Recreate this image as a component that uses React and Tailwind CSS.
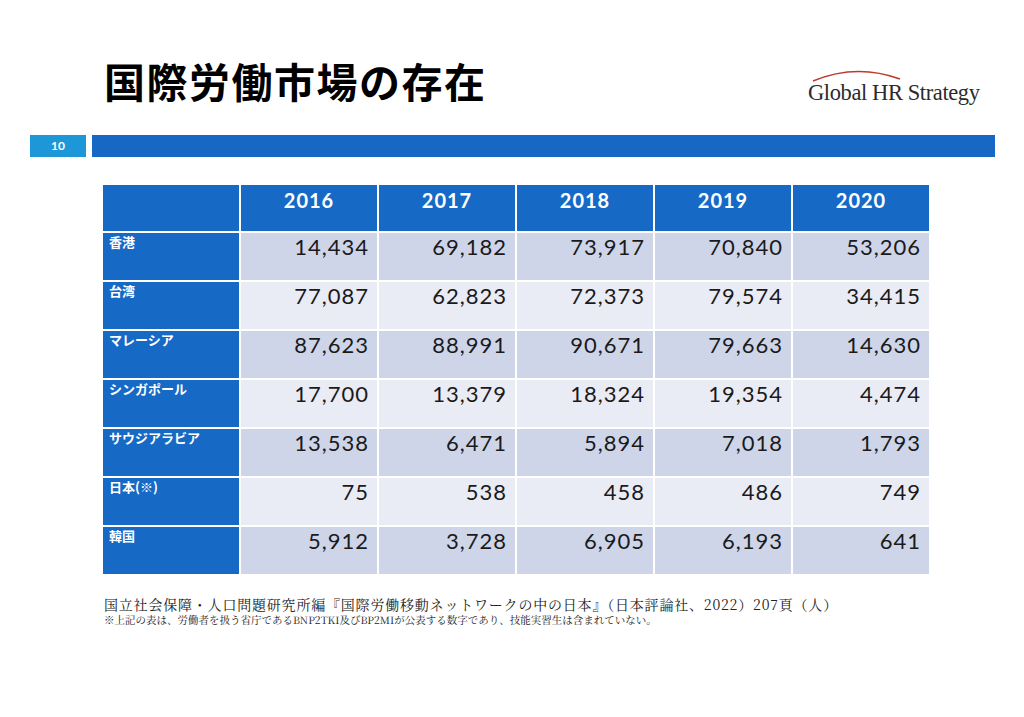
import React from 'react'

const years = ['2016', '2017', '2018', '2019', '2020']

const rows = [
    ['香港', ['14,434', '69,182', '73,917', '70,840', '53,206']],
    ['台湾', ['77,087', '62,823', '72,373', '79,574', '34,415']],
    ['マレーシア', ['87,623', '88,991', '90,671', '79,663', '14,630']],
    ['シンガポール', ['17,700', '13,379', '18,324', '19,354', '4,474']],
    ['サウジアラビア', ['13,538', '6,471', '5,894', '7,018', '1,793']],
    ['日本(※)', ['75', '538', '458', '486', '749']],
    ['韓国', ['5,912', '3,728', '6,905', '6,193', '641']],
]

const jp = { fontFamily: '"Noto Sans CJK JP", sans-serif' }
const num = { fontFamily: 'Lato, "Open Sans", sans-serif' }
const serif = { fontFamily: '"Noto Serif CJK JP", "Liberation Serif", serif' }

const Logo = () => (
    <div className='relative w-[172px] h-[40px]'>
        <svg className='absolute left-0 top-0' width='172' height='20' viewBox='0 0 172 20'>
            <path d='M5 14 Q 48 -4 92 12' stroke='#c0392b' strokeWidth='1.5' fill='none' />
        </svg>
        <div className='absolute left-0 top-[9px] text-[22.5px] tracking-[-0.4px] text-[#2b2b2b] whitespace-nowrap'
            style={{ fontFamily: '"Liberation Serif", serif' }}>
            Global HR Strategy
        </div>
    </div>
)

const App = () => {
    return (
        <div className='w-[1024px] h-[717px] bg-white relative overflow-hidden' style={jp}>

            <div className='flex items-start pt-[52px] pl-[104px] pr-[44px] h-[135px]'>
                <h1 className='text-[41px] font-bold text-black leading-[56px] tracking-[1.5px]'>国際労働市場の存在</h1>
                <div className='ml-auto mt-[15px]'>
                    <Logo />
                </div>
            </div>

            <div className='flex gap-[6px] pl-[30px] h-[22px]'>
                <div className='w-[56px] bg-[#1d97d8] text-white text-[12px] font-bold flex items-center justify-center' style={num}>10</div>
                <div className='w-[903px] bg-[#1768c4]'></div>
            </div>

            <div className='ml-[103px] mt-[28px] w-[826px] grid grid-cols-[136px_repeat(5,136px)] gap-[2px]'>
                <div className='h-[46px] bg-[#1769c6]'></div>
                {years.map((y) => (
                    <div key={y} className='h-[46px] bg-[#1769c6] text-white font-bold text-[20px] tracking-[1px] text-center' style={num}>{y}</div>
                ))}
                {rows.map(([name, vals], i) => (
                    <React.Fragment key={name}>
                        <div className='h-[47px] bg-[#1769c6] text-white font-bold text-[13px] pl-[6px] leading-[18px]'>{name}</div>
                        {vals.map((v, j) => (
                            <div key={j}
                                className={'h-[47px] text-right pr-[8px] leading-[28px] text-[22px] tracking-[1px] text-[#1a1a1a] ' + (i % 2 === 0 ? 'bg-[#cfd5e9]' : 'bg-[#e9ebf5]')}
                                style={num}>{v}</div>
                        ))}
                    </React.Fragment>
                ))}
            </div>

            <div className='ml-[104px] mt-[21px] text-[14px] tracking-[0.8px] leading-[18px] text-[#222] whitespace-nowrap' style={serif}>
                国立社会保障・人口問題研究所編『国際労働移動ネットワークの中の日本』（日本評論社、2022）207頁（人）
            </div>
            <div className='ml-[104px] text-[10.5px] leading-[13px] text-[#222] whitespace-nowrap' style={serif}>
                ※上記の表は、労働者を扱う省庁であるBNP2TKI及びBP2MIが公表する数字であり、技能実習生は含まれていない。
            </div>
        </div>
    )
}

export default App
